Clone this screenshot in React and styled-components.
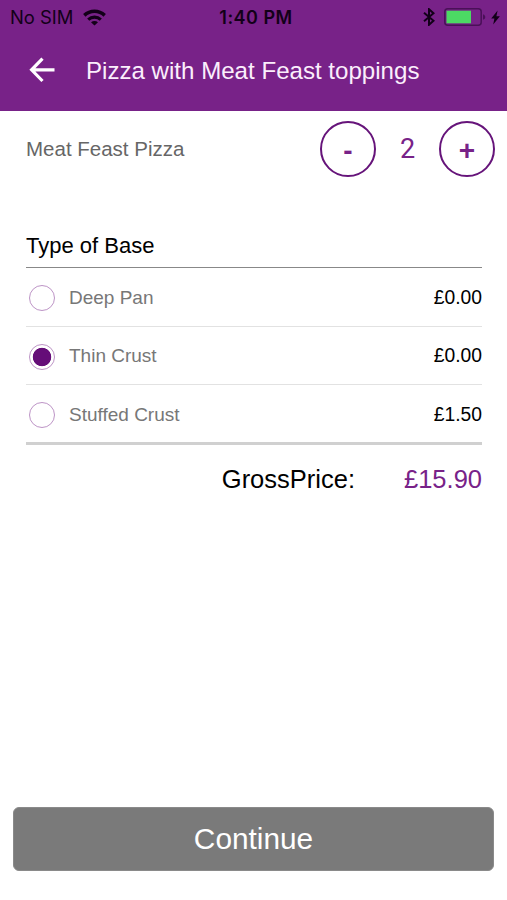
import { useState } from "react";
import styled, { createGlobalStyle } from "styled-components";

const GlobalStyle = createGlobalStyle`
  * {
    box-sizing: border-box;
  }
  body {
    margin: 0;
    background: #fff;
    font-family: "Liberation Sans", Arial, sans-serif;
  }
  button {
    padding: 0;
    border: none;
    background: none;
    font-family: inherit;
  }
`;

const Screen = styled.div`
  display: flex;
  flex-direction: column;
  height: 100vh;
`;

const Header = styled.header`
  height: 111px;
  background: #782288;
`;
const StatusBar = styled.div`
  display: grid;
  grid-template-columns: 1fr auto 1fr;
  align-items: center;
  height: 34px;
  padding: 0 7px 0 10px;
  color: #120018;
  font-family: Inter, sans-serif;
  font-size: 18.4px;
`;
const Carrier = styled.div`
  display: flex;
  align-items: center;
  gap: 10px;
`;
const Clock = styled.div`
  margin-left: 2px;
  font-weight: 600;
  font-size: 18px;
  letter-spacing: 0.5px;
`;
const Indicators = styled.div`
  display: flex;
  align-items: center;
  justify-content: flex-end;
`;
const Battery = styled.svg`
  margin: 0 5px 0 9px;
`;

const TitleBar = styled.div`
  display: flex;
  align-items: center;
  height: 72px;
  padding-left: 29px;
`;
const BackButton = styled.button`
  display: flex;
  width: 57px;
`;
const Title = styled.h1`
  margin: 1px 0 0;
  color: #fbeefc;
  font-size: 24.1px;
  font-weight: 400;
`;

const ProductRow = styled.section`
  display: flex;
  align-items: center;
  justify-content: space-between;
  height: 76px;
  padding: 0 12px 0 26px;
`;
const ProductName = styled.div`
  color: #666;
  font-size: 20.5px;
`;
const Stepper = styled.div`
  display: flex;
  align-items: center;
`;
const StepButton = styled.button`
  display: flex;
  align-items: center;
  justify-content: center;
  width: 56px;
  height: 56px;
  padding-top: 3px;
  border: 2px solid #66147a;
  border-radius: 50%;
  color: #782288;
  font-size: 28px;
  font-weight: 700;
`;
const Quantity = styled.div`
  width: 63px;
  color: #782288;
  font-family: Roboto, sans-serif;
  font-size: 27px;
  text-align: center;
`;

const Options = styled.section`
  padding: 45px 25px 0 26px;
`;
const OptionsTitle = styled.h2`
  height: 36px;
  margin: 0;
  border-bottom: 1px solid #888;
  font-size: 22px;
  font-weight: 400;
  line-height: 27px;
`;
const Option = styled.label`
  display: flex;
  align-items: center;
  height: ${(props) => (props.$last ? "60px" : "58.5px")};
  border-bottom: ${(props) =>
    props.$last ? "3px solid #d0d0d0" : "1px solid #e2e2e2"};
`;
const Radio = styled.input`
  appearance: none;
  width: 26px;
  height: 26px;
  margin: 3px 14px 0 3px;
  border: 1.5px solid #bd94c6;
  border-radius: 50%;
  background: ${(props) =>
    props.checked
      ? "radial-gradient(circle, #650d78 8.8px, transparent 9.6px)"
      : "#fff"};
`;
const OptionName = styled.span`
  flex: 1;
  padding-top: 2px;
  color: #777;
  font-size: 19px;
`;
const OptionPrice = styled.span`
  padding-top: 2px;
  font-size: 19.3px;
`;

const Total = styled.div`
  display: flex;
  justify-content: flex-end;
  gap: 49px;
  padding: 19px 25px 0;
  font-size: 25.5px;
  line-height: 30px;
`;
const TotalPrice = styled.span`
  color: #782288;
`;

const ContinueButton = styled.button`
  height: 64px;
  margin: auto 13px 29px;
  border: 1px solid #8a8a8a;
  border-radius: 6px;
  background: #7a7a7a;
  color: #fff;
  font-size: 29.8px;
`;

const bases = [
  { name: "Deep Pan", price: 0 },
  { name: "Thin Crust", price: 0 },
  { name: "Stuffed Crust", price: 1.5 },
];

const WifiIcon = () => (
  <svg width="23" height="17" viewBox="0 0 23 17" fill="none">
    <path d="M1.3 6.4C7.1 1 15.9 1 21.7 6.4" stroke="#120018" strokeWidth="3.5" />
    <path d="M5.2 10.6c3.6-3.2 9-3.2 12.6 0" stroke="#120018" strokeWidth="3.2" />
    <path d="M8 13.2c2-1.7 5-1.7 7 0L11.5 16.6z" fill="#120018" />
  </svg>
);

const App = () => {
  const [quantity, setQuantity] = useState(2);
  const [base, setBase] = useState("Thin Crust");

  return (
    <Screen>
      <GlobalStyle />
      <Header>
        <StatusBar>
          <Carrier>
            No SIM
            <WifiIcon />
          </Carrier>
          <Clock>1:40 PM</Clock>
          <Indicators>
            <svg width="12" height="18" viewBox="0 0 12 18" fill="none">
              <path
                d="M1 4.8l9.5 8L6 16.8V1.2l4.5 4L1 13.2"
                stroke="#120018"
                strokeWidth="2"
              />
            </svg>
            <Battery width="42" height="18" viewBox="0 0 42 18">
              <rect x="0.8" y="0.8" width="36.4" height="16.4" rx="3" fill="none" stroke="#4a1058" strokeWidth="1.5" />
              <rect x="2.5" y="2.7" width="24.5" height="12.6" fill="#4cd964" />
              <path d="M39 6.2c3 1 3 4.6 0 5.6z" fill="#4a1058" />
            </Battery>
            <svg width="9" height="15" viewBox="0 0 9 15">
              <path d="M6.6 0.5L0.2 8.6h3.2L2.2 14.6 8.9 6.200H5.400z" fill="#120018" />
            </svg>
          </Indicators>
        </StatusBar>
        <TitleBar>
          <BackButton aria-label="Back">
            <svg width="27" height="26" viewBox="0 0 27 26" fill="none">
              <path d="M13.500 1.700L2.600 12.800 13.500 24M2.600 12.800H25.500" stroke="#fff" strokeWidth="3.2" />
            </svg>
          </BackButton>
          <Title>Pizza with Meat Feast toppings</Title>
        </TitleBar>
      </Header>
      <ProductRow>
        <ProductName>Meat Feast Pizza</ProductName>
        <Stepper>
          <StepButton onClick={() => setQuantity(Math.max(1, quantity - 1))}>
            -
          </StepButton>
          <Quantity>{quantity}</Quantity>
          <StepButton onClick={() => setQuantity(quantity + 1)}>+</StepButton>
        </Stepper>
      </ProductRow>
      <Options>
        <OptionsTitle>Type of Base</OptionsTitle>
        {bases.map((item, index) => (
          <Option key={item.name} $last={index === bases.length - 1}>
            <Radio
              type="radio"
              name="base"
              checked={base === item.name}
              onChange={() => setBase(item.name)}
            />
            <OptionName>{item.name}</OptionName>
            <OptionPrice>£{item.price.toFixed(2)}</OptionPrice>
          </Option>
        ))}
      </Options>
      <Total>
        <span>GrossPrice:</span>
        <TotalPrice>£15.90</TotalPrice>
      </Total>
      <ContinueButton>Continue</ContinueButton>
    </Screen>
  );
};

export default App;
